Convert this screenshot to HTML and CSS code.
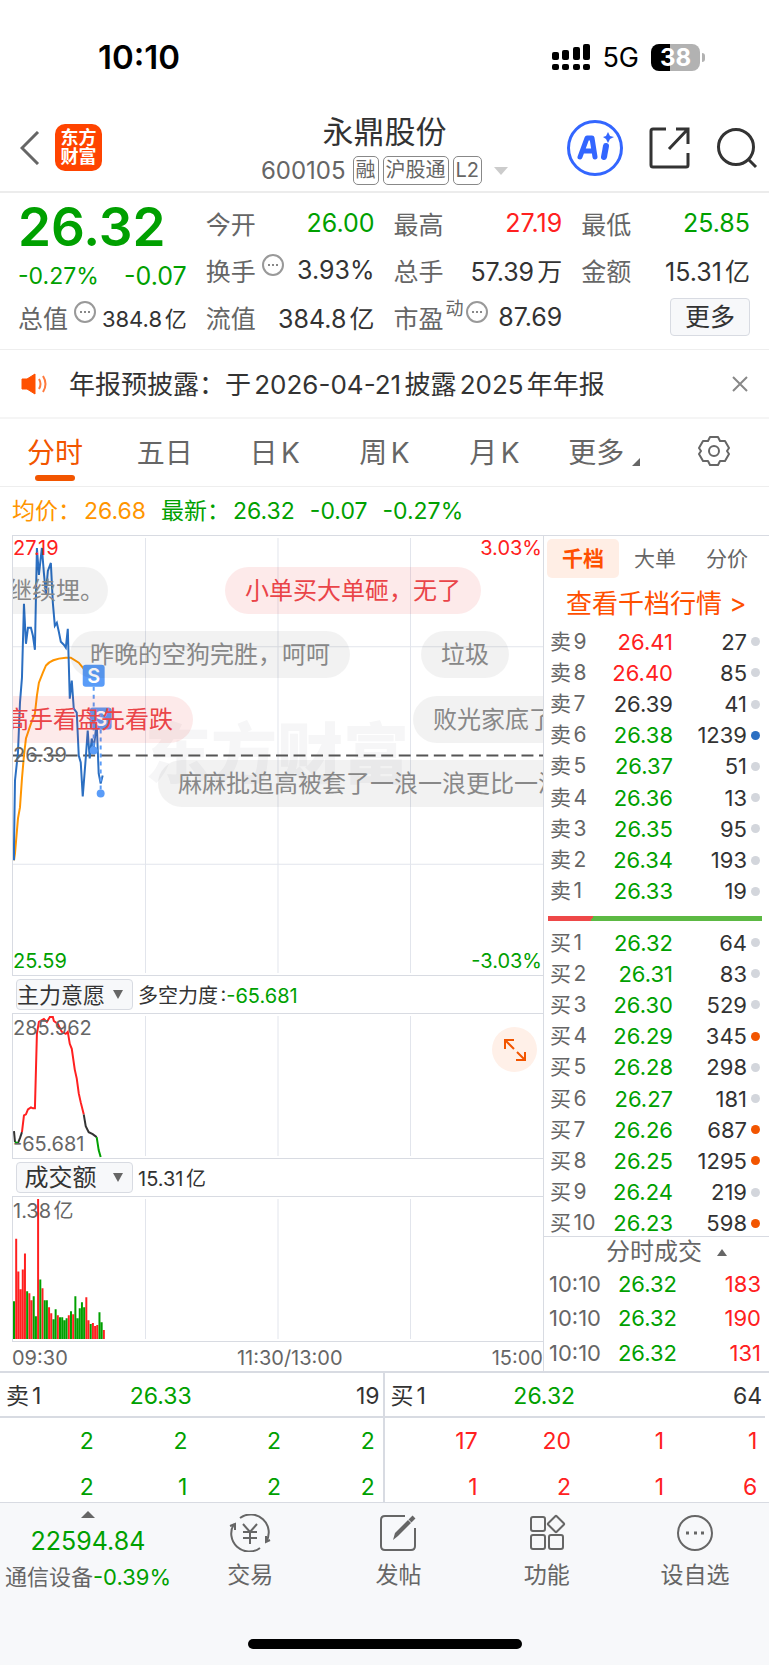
FILE: index.html
```html
<!DOCTYPE html>
<html lang="zh-CN">
<head>
<meta charset="UTF-8">
<meta name="viewport" content="width=device-width, initial-scale=1">
<title>永鼎股份 600105</title>
<link rel="stylesheet" href="styles.css">
</head>
<body>
  <div class="status">
    <span class="clock">10:10</span>
    <div class="status-right">
      <svg width="38" height="26" viewBox="0 0 38 26">
        <rect x="0" y="8" width="7" height="8" rx="2"/><rect x="10" y="6" width="7" height="10" rx="2"/>
        <rect x="21" y="3" width="7" height="13" rx="2"/><rect x="31" y="0" width="7" height="16" rx="2"/>
        <rect x="0" y="20" width="7" height="6" rx="2"/><rect x="10" y="20" width="7" height="6" rx="2"/>
        <rect x="21" y="20" width="7" height="6" rx="2"/><rect x="31" y="20" width="7" height="6" rx="2"/>
      </svg>
      <span class="net">5G</span>
      <span class="battery">38</span>
    </div>
  </div>

  <header class="header">
    <div class="header-left">
      <button class="icon-btn" aria-label="返回">
        <svg width="20" height="34" viewBox="0 0 20 34" fill="none" stroke="#666" stroke-width="3"><path d="M18 1L2 17L18 33"/></svg>
      </button>
      <a class="logo" href="#">东方<br>财富</a>
    </div>
    <div class="title">
      <h1>永鼎股份</h1>
      <div class="code">
        <span class="code-num">600105</span>
        <span class="tag">融</span><span class="tag">沪股通</span><span class="tag">L2</span>
        <svg class="code-arrow" width="14" height="8" viewBox="0 0 14 8"><path d="M0 0H14L7 8Z" fill="#ccc"/></svg>
      </div>
    </div>
    <div class="header-right">
      <button class="icon-btn" aria-label="AI">
        <svg width="58" height="58" viewBox="0 0 58 58">
          <circle cx="29" cy="29" r="26.5" fill="none" stroke="#3366ff" stroke-width="3"/>
          <path d="M14 38L21 19H26L29 38M17 32H28" fill="none" stroke="#3366ff" stroke-width="5" stroke-linejoin="round" stroke-linecap="round"/>
          <path d="M40 27L38 38" stroke="#3366ff" stroke-width="6" stroke-linecap="round"/>
          <path d="M42 13L44 17L48 18L44 20L42 24L40 20L37 18L40 17Z" fill="#3366ff"/>
        </svg>
      </button>
      <button class="icon-btn" aria-label="分享">
        <svg width="42" height="42" viewBox="0 0 42 42" fill="none" stroke="#333" stroke-width="3">
          <path d="M17 2H4Q2 2 2 4V38Q2 40 4 40H37Q39 40 39 38V26"/><path d="M20 22L38 3M27 2H39V17"/>
        </svg>
      </button>
      <button class="icon-btn" aria-label="搜索">
        <svg width="42" height="42" viewBox="0 0 42 42" fill="none" stroke="#333" stroke-width="3">
          <circle cx="20" cy="20" r="17.5"/><path d="M32 32L40 40"/>
        </svg>
      </button>
    </div>
  </header>

  <section class="quote">
    <div class="col">
      <div class="price">26.32</div>
      <div class="change"><span>-0.27%</span><span class="change-abs">-0.07</span></div>
      <div class="cell small"><span>总值</span><i class="more-dot"></i><b>384.8亿</b></div>
    </div>
    <div class="col">
      <div class="cell"><span>今开</span><b class="green">26.00</b></div>
      <div class="cell"><span>换手</span><i class="more-dot"></i><b>3.93%</b></div>
      <div class="cell"><span>流值</span><b>384.8亿</b></div>
    </div>
    <div class="col">
      <div class="cell"><span>最高</span><b class="red">27.19</b></div>
      <div class="cell"><span>总手</span><b>57.39万</b></div>
      <div class="cell"><span>市盈</span><sup>动</sup><i class="more-dot tight"></i><b>87.69</b></div>
    </div>
    <div class="col">
      <div class="cell"><span>最低</span><b class="green">25.85</b></div>
      <div class="cell"><span>金额</span><b>15.31亿</b></div>
      <div class="cell"><button class="btn-more">更多</button></div>
    </div>
  </section>

  <div class="notice">
    <svg width="28" height="22" viewBox="0 0 28 22">
      <path d="M1 6H6L14 1V21L6 16H1Z" fill="#ff5000" stroke="#ff5000" stroke-linejoin="round"/>
      <path d="M18 6Q21 11 18 16M22 3Q27 11 22 19" fill="none" stroke="#ff7a3d" stroke-width="2"/>
    </svg>
    <p>年报预披露：于2026-04-21披露2025年年报</p>
    <button class="icon-btn" aria-label="关闭">
      <svg width="16" height="16" viewBox="0 0 16 16" stroke="#888" stroke-width="2"><path d="M1 1L15 15M15 1L1 15"/></svg>
    </button>
  </div>

  <nav class="tabs">
    <button class="tab active">分时</button>
    <button class="tab">五日</button>
    <button class="tab">日K</button>
    <button class="tab">周K</button>
    <button class="tab">月K</button>
    <button class="tab">更多<svg class="corner" width="8" height="8" viewBox="0 0 8 8"><path d="M8 0V8H0Z" fill="#666"/></svg></button>
    <button class="tab" aria-label="设置">
      <svg width="32" height="32" viewBox="0 0 32 32" fill="none" stroke="#666" stroke-width="2" stroke-linejoin="round">
        <path d="M12 2H20L22 6L27 6L31 13L29 16L31 19L27 26L22 26L20 30H12L10 26L5 26L1 19L3 16L1 13L5 6L10 6Z"/><circle cx="16" cy="16" r="5"/>
      </svg>
    </button>
  </nav>

  <div class="legend">
    <span class="orange">均价：<b>26.68</b></span>
    <span class="green">最新：<b>26.32</b></span>
    <span class="green">-0.07</span>
    <span class="green">-0.27%</span>
  </div>

  <main class="main">
    <div class="charts">
      <div class="chart chart-price">
        <span class="watermark">东方财富</span>
        <svg class="plot" viewBox="0 0 532 440" preserveAspectRatio="none" fill="none">
          <path d="M133 2V438M266 2V438M399 2V438M0 111H532M0 329H532" stroke="#e2e5ec"/>
          <path d="M0 220H532" stroke="#555" stroke-width="2" stroke-dasharray="12 5.6"/>
          <path d="M1 325L2 318L5 283L7 272L9 243L11 220L13 203L18 188L22 178L24 160L26 147L30 137L33 130Q38 123 53 122H58L66 127L75 138L81 140L90 143" stroke="#ff9500" stroke-width="2"/>
          <path d="M1 325L1 310L2 245L5 217L7 167L9 142L11 68L13 108L15 92L18 92L20 100L22 114L24 12L26 39L29 12L31 37L33 58L35 35L38 27L40 67L42 90L44 87L46 96L48 106L51 109L53 112L55 93L57 163L59 145L61 173L64 177L66 220L68 227L70 261L73 223L75 195L77 223L79 203L81 213L84 187L86 238L88 248L90 240" stroke="#2b6fc2" stroke-width="2"/>
          <path d="M81 151V215M88 194V258" stroke="#5a9cf8" stroke-width="2" stroke-dasharray="4 4"/>
          <circle cx="81" cy="215" r="4" fill="#5a9cf8"/><circle cx="88" cy="258" r="4" fill="#5a9cf8"/>
          <rect x="70" y="129" width="22" height="22" rx="3" fill="#5a9cf8"/>
          <rect x="77" y="172" width="22" height="22" rx="3" fill="#5a9cf8"/>
          <text class="mark" x="81" y="147">S</text>
          <text class="mark" x="88" y="190">S</text>
        </svg>
        <span class="lab top-left red">27.19</span>
        <span class="lab top-right red">3.03%</span>
        <span class="lab mid-left">26.39</span>
        <span class="lab bottom-left green">25.59</span>
        <span class="lab bottom-right green">-3.03%</span>
        <span class="bubble cut b1">继续埋。</span>
        <span class="bubble hot b2">小单买大单砸，无了</span>
        <span class="bubble b3">昨晚的空狗完胜，呵呵</span>
        <span class="bubble b4">垃圾</span>
        <span class="bubble hot b5">高手看盘先看跌</span>
        <span class="bubble b6">败光家底了</span>
        <span class="bubble b7">麻麻批追高被套了一浪一浪更比一浪</span>
      </div>

      <div class="indicator">
        <div class="pick">
          <select aria-label="指标一"><option>主力意愿</option></select>
          <svg width="10" height="9" viewBox="0 0 10 9"><path d="M0 0H10L5 9Z" fill="#666"/></svg>
        </div>
        <span>多空力度:<em class="green">-65.681</em></span>
      </div>
      <div class="chart chart-sub">
        <svg class="plot" viewBox="0 0 532 145" preserveAspectRatio="none" fill="none">
          <path d="M133 2V143M266 2V143M399 2V143" stroke="#e2e5ec"/>
          <g stroke-width="2">
            <path d="M1 118L2 129M5 130L7 125L9 119M71 101L73 113L76 119L80 121L84 124" stroke="#333"/>
            <path d="M2 129L5 130M84 124L86 137L88 144" stroke="#00a000"/>
            <path d="M9 119L11 102L13 101L15 96L18 94L20 95L22 95L24 20L26 8L31 5L34 8L37 3L40 3L41 7L45 10L49 18L53 20L55 18L57 30L59 35L62 56L64 65L66 80L68 89L71 101" stroke="#ff2020"/>
          </g>
        </svg>
        <span class="lab sub-top">285.962</span>
        <span class="lab sub-bottom">-65.681</span>
        <button class="expand" aria-label="全屏">
          <svg width="24" height="24" viewBox="0 0 24 24" fill="none" stroke="#f25500" stroke-width="2">
            <path d="M2 11V2H11M2 2L11 11M22 14V22H13M22 22L14 14"/>
          </svg>
        </button>
      </div>

      <div class="indicator">
        <div class="pick wide">
          <select aria-label="指标二"><option>成交额</option></select>
          <svg width="10" height="9" viewBox="0 0 10 9"><path d="M0 0H10L5 9Z" fill="#666"/></svg>
        </div>
        <span>15.31亿</span>
      </div>
      <div class="chart chart-sub">
        <svg class="plot" viewBox="0 0 532 145" preserveAspectRatio="none" fill="none">
          <path d="M133 2V143M266 2V143M399 2V143" stroke="#e2e5ec"/>
          <g stroke-width="2">
            <path d="M3.2 143V42M5.4 143V75M7.6 143V93M9.8 143V73M12 143V57M16.4 143V97M18.6 143V104M25.2 143V2M29.6 143V92M36.2 143V111M38.4 143V117M45 143V119M56 143V119M60.4 143V118M73.6 143V101M75.8 143V124M80.2 143V127M82.4 143V130M84.6 143V129M91.2 143V134" stroke="#ff2020"/>
            <path d="M1 143V105M14.2 143V95M20.8 143V100M23 143V120M27.4 143V83M31.8 143V104M34 143V104M40.6 143V123M42.8 143V113M47.2 143V121M49.4 143V121M51.6 143V124M53.8 143V122M58.2 143V115M62.6 143V100M64.8 143V122M67 143V112M69.2 143V106M71.4 143V111M78 143V128M86.8 143V116M89 143V126" stroke="#00a000"/>
          </g>
        </svg>
        <span class="lab sub-top">1.38亿</span>
      </div>
      <div class="axis"><span>09:30</span><span class="noon">11:30/13:00</span><span>15:00</span></div>
    </div>

    <aside class="side">
      <div class="side-tabs">
        <button class="side-tab on">千档</button><button class="side-tab">大单</button><button class="side-tab">分价</button>
      </div>
      <a class="depth-link" href="#">查看千档行情 &gt;</a>
      <table class="book sell">
        <tr><th>卖9</th><td class="red">26.41</td><td>27</td><td><i></i></td></tr>
        <tr><th>卖8</th><td class="red">26.40</td><td>85</td><td><i></i></td></tr>
        <tr><th>卖7</th><td>26.39</td><td>41</td><td><i></i></td></tr>
        <tr><th>卖6</th><td class="green">26.38</td><td>1239</td><td><i class="dot-blue"></i></td></tr>
        <tr><th>卖5</th><td class="green">26.37</td><td>51</td><td><i></i></td></tr>
        <tr><th>卖4</th><td class="green">26.36</td><td>13</td><td><i></i></td></tr>
        <tr><th>卖3</th><td class="green">26.35</td><td>95</td><td><i></i></td></tr>
        <tr><th>卖2</th><td class="green">26.34</td><td>193</td><td><i></i></td></tr>
        <tr><th>卖1</th><td class="green">26.33</td><td>19</td><td><i></i></td></tr>
      </table>
      <div class="ratio"></div>
      <table class="book buy">
        <tr><th>买1</th><td class="green">26.32</td><td>64</td><td><i></i></td></tr>
        <tr><th>买2</th><td class="green">26.31</td><td>83</td><td><i></i></td></tr>
        <tr><th>买3</th><td class="green">26.30</td><td>529</td><td><i></i></td></tr>
        <tr><th>买4</th><td class="green">26.29</td><td>345</td><td><i class="dot-orange"></i></td></tr>
        <tr><th>买5</th><td class="green">26.28</td><td>298</td><td><i></i></td></tr>
        <tr><th>买6</th><td class="green">26.27</td><td>181</td><td><i></i></td></tr>
        <tr><th>买7</th><td class="green">26.26</td><td>687</td><td><i class="dot-orange"></i></td></tr>
        <tr><th>买8</th><td class="green">26.25</td><td>1295</td><td><i class="dot-orange"></i></td></tr>
        <tr><th>买9</th><td class="green">26.24</td><td>219</td><td><i></i></td></tr>
        <tr><th>买10</th><td class="green">26.23</td><td>598</td><td><i class="dot-orange"></i></td></tr>
      </table>
      <button class="ticks-title">分时成交<svg width="10" height="7" viewBox="0 0 10 7"><path d="M5 0L10 7H0Z" fill="#666"/></svg></button>
      <table class="ticks">
        <tr><th>10:10</th><td class="green">26.32</td><td class="red">183</td></tr>
        <tr><th>10:10</th><td class="green">26.32</td><td class="red">190</td></tr>
        <tr><th>10:10</th><td class="green">26.32</td><td class="red">131</td></tr>
      </table>
    </aside>
  </main>

  <section class="queue">
    <div class="queue-side">
      <div class="queue-head"><span>卖1</span><span class="green">26.33</span><span>19</span></div>
      <table class="green">
        <tr><td>2</td><td>2</td><td>2</td><td>2</td></tr>
        <tr><td>2</td><td>1</td><td>2</td><td>2</td></tr>
      </table>
    </div>
    <div class="queue-side">
      <div class="queue-head"><span>买1</span><span class="green">26.32</span><span>64</span></div>
      <table class="red">
        <tr><td>17</td><td>20</td><td>1</td><td>1</td></tr>
        <tr><td>1</td><td>2</td><td>1</td><td>6</td></tr>
      </table>
    </div>
  </section>

  <footer class="footer">
    <div class="toolbar">
      <button class="sector">
        <svg width="14" height="7" viewBox="0 0 14 7"><path d="M7 0L14 7H0Z" fill="#666"/></svg>
        <span class="index green">22594.84</span>
        <span class="sector-name">通信设备<em class="green">-0.39%</em></span>
      </button>
      <button class="tool">
        <svg width="42" height="38" viewBox="0 0 42 38" fill="none" stroke="#666" stroke-width="2">
          <path d="M11 4A18 18 0 0 1 37 28M31 34A18 18 0 0 1 5 10M1 12L6 10V16M41 26L37 28V22"/>
          <path d="M14 10L21 18L28 10M21 18V30M14 18H28M14 24H28"/>
        </svg>
        交易
      </button>
      <button class="tool">
        <svg width="42" height="38" viewBox="0 0 42 38" fill="none" stroke="#666" stroke-width="2">
          <path d="M28 2H8Q4 2 4 6V32Q4 36 8 36H34Q38 36 38 32V14"/>
          <path d="M16 26L18 19L31 6L34 9L21 22Z" fill="#666" stroke="none"/><path d="M33 7L37 3" stroke-width="4"/>
        </svg>
        发帖
      </button>
      <button class="tool">
        <svg width="42" height="38" viewBox="0 0 42 38" fill="none" stroke="#666" stroke-width="2">
          <rect x="5" y="3" width="14" height="14" rx="2"/><rect x="5" y="21" width="14" height="14" rx="2"/>
          <rect x="23" y="21" width="14" height="14" rx="2"/><rect x="24" y="4" width="12" height="12" rx="1" transform="rotate(45 30 10)"/>
        </svg>
        功能
      </button>
      <button class="tool">
        <svg width="42" height="38" viewBox="0 0 42 38" fill="none" stroke="#666" stroke-width="2">
          <circle cx="21" cy="19" r="17"/><path d="M12 19H15M20 19H23M27 19H30" stroke-width="3"/>
        </svg>
        设自选
      </button>
    </div>
    <div class="home-bar"></div>
  </footer>
</body>
</html>
```
FILE: styles.css
```css
* { box-sizing: border-box; }
body {
margin: 0;
background: #fff;
color: #333;
font-family: Inter, "Noto Sans CJK SC", sans-serif;
font-size: 24px;
text-autospace: normal;
white-space: nowrap;
}
h1, p { margin: 0; font-weight: normal; }
svg { display: block; flex: none; }
i, em { font-style: normal; }
a { text-decoration: none; }
button, select {
font-family: inherit;
color: inherit;
background: none;
border: 0;
padding: 0;
margin: 0;
}
table { border-collapse: collapse; }
th { font-weight: normal; }
td, th { padding: 0; }
.green { color: #00a000; }
.red { color: #ff2020; }
.orange { color: #ff9500; }

/* status bar */
.status {
display: flex;
justify-content: space-between;
align-items: center;
height: 100px;
padding: 14px 69px 0 98px;
color: #000;
}
.clock { font-size: 33px; font-weight: 600; }
.status-right { display: flex; align-items: center; }
.net { margin: 0 12px; font-size: 27px; }
.battery {
position: relative;
width: 49px;
height: 27px;
border-radius: 8px;
background: linear-gradient(90deg, #000 38%, #b2b2b2 38%);
color: #fff;
font-size: 24px;
font-weight: 700;
line-height: 27px;
text-align: center;
}
.battery::after {
content: "";
position: absolute;
right: -5px; top: 9px;
width: 3px; height: 9px;
border-radius: 0 3px 3px 0;
background: #b2b2b2;
}

/* header */
.header {
display: grid;
grid-template-columns: 1fr auto 1fr;
align-items: center;
height: 93px;
padding: 4px 11px 0;
border-bottom: 2px solid #ececec;
}
.icon-btn { display: flex; }
.header-left { display: flex; align-items: center; gap: 15px; padding-left: 9px; }
.logo {
width: 47px; height: 47px;
padding-top: 4px;
border-radius: 10px;
background: #ff4400;
color: #fff;
font-size: 18px;
font-weight: 700;
line-height: 19px;
text-align: center;
}
.title { text-align: center; }
.title h1 { font-size: 31px; line-height: 42px; margin-top: 4px; }
.code { display: flex; align-items: center; gap: 4px; height: 36px; color: #666; }
.code-num { margin-right: 3px; font-size: 24px; }
.tag {
border: 1px solid #888;
border-radius: 5px;
padding: 0 2px;
font-size: 20px;
line-height: 27px;
}
.code-arrow { margin-left: 8px; }
.header-right { display: flex; align-items: center; justify-content: flex-end; gap: 25px; }

/* quote */
.quote {
display: grid;
grid-template-columns: repeat(4, 1fr);
gap: 19px;
padding: 6px 19px 9px 18px;
border-bottom: 1px solid #eee;
}
.price { height: 59px; color: #00a000; font-size: 53px; font-weight: 600; line-height: 57px; }
.change { display: flex; justify-content: space-between; height: 35px; color: #00a000; font-size: 23px; line-height: 36px; }
.change-abs { font-size: 25px; }
.cell { display: flex; align-items: center; height: 47px; font-size: 25px; }
.cell span { color: #666; }
.cell b { margin-left: auto; font-weight: normal; }
.small b { font-size: 22px; }
.cell sup { margin-left: 2px; padding-bottom: 16px; color: #666; font-size: 18px; line-height: 18px; }
.more-dot {
display: flex;
align-items: center;
justify-content: center;
width: 22px; height: 22px;
margin: 0 0 10px 6px;
border: 2px solid #999;
border-radius: 50%;
}
.more-dot::before {
content: "";
width: 2px; height: 2px;
background: #888;
box-shadow: -4px 0 #888, 4px 0 #888;
}
.tight { margin-left: 2px; }
.btn-more {
width: 80px; height: 38px;
margin-left: auto;
border: 1px solid #d8dbe2;
border-radius: 4px;
background: #f7f8fa;
font-size: 25px;
line-height: 32px;
}

/* notice */
.notice {
display: flex;
align-items: center;
height: 69px;
padding: 0 21px;
border-bottom: 2px solid #f5f5f5;
}
.notice p { flex: 1; margin-left: 20px; padding-bottom: 2px; font-size: 26px; }

/* period tabs */
.tabs {
display: flex;
height: 68px;
border-bottom: 1px solid #eee;
}
.tab {
position: relative;
flex: 1;
display: flex;
align-items: center;
justify-content: center;
padding-bottom: 4px;
color: #666;
font-size: 28px;
}
.active { color: #f25500; }
.active::after {
content: "";
position: absolute;
left: 50%; bottom: 5px;
width: 40px; height: 6px;
margin-left: -20px;
border-radius: 3px;
background: #f25500;
}
.corner { margin: 22px 0 0 8px; }

.legend { display: flex; gap: 15px; height: 48px; padding-left: 12px; font-size: 23px; line-height: 48px; }
.legend b { margin-left: 3px; font-weight: normal; }

/* charts */
.main {
display: grid;
grid-template-columns: 1fr 226px;
padding-left: 12px;
border-bottom: 2px solid #d8dbe2;
}
.charts { min-width: 0; }
.chart {
position: relative;
overflow: hidden;
border: solid #d8dbe2;
border-width: 1px 0 1px 1px;
}
.chart-price { height: 441px; }
.chart-sub { height: 146px; }
.plot { position: relative; width: 100%; height: 100%; }
.mark { fill: #fff; font-size: 20px; font-weight: 600; text-anchor: middle; }
.lab { position: absolute; color: #666; font-size: 20px; line-height: 24px; }
.lab.red { color: #ff2020; }
.lab.green { color: #00a000; }
.top-left { left: 0; top: 0; }
.top-right { right: 1px; top: 0; }
.mid-left { left: 0; top: 207px; }
.bottom-left { left: 0; bottom: 2px; }
.bottom-right { right: 1px; bottom: 2px; }
.sub-top { left: 0; top: 2px; }
.sub-bottom { left: 0; bottom: 2px; }
.watermark {
position: absolute;
left: 132px; top: 180px;
color: #f6f6f7;
font-size: 66px;
font-weight: 900;
line-height: 76px;
}
.bubble {
position: absolute;
height: 47px;
padding: 0 20px;
border-radius: 24px;
background: rgba(0, 0, 0, 0.05);
color: #888;
font-size: 24px;
line-height: 48px;
}
.hot { background: rgba(240, 50, 50, 0.1); color: #ea4448; }
.cut { padding-right: 4px; }
.b1 { left: -25px; top: 31px; }
.b2 { left: 212px; top: 31px; }
.b3 { left: 57px; top: 95px; }
.b4 { left: 408px; top: 95px; }
.b5 { left: -28px; top: 160px; }
.b6 { left: 400px; top: 160px; }
.b7 { left: 145px; top: 224px; }

.indicator { display: flex; align-items: center; gap: 5px; height: 37px; padding-left: 4px; font-size: 20px; }
.pick { position: relative; }
.pick select {
display: block;
appearance: none;
width: 117px; height: 31px;
padding-right: 28px;
border: 1px solid #d8dbe2;
border-radius: 4px;
background: #f7f8fa;
font-size: 22px;
line-height: 28px;
text-align-last: center;
}
.wide select { font-size: 24px; }
.pick svg { position: absolute; right: 10px; top: 11px; pointer-events: none; }
.expand {
position: absolute;
right: 6px; top: 13px;
display: flex;
align-items: center;
justify-content: center;
width: 45px; height: 45px;
border-radius: 50%;
background: #fff0e8;
}
.axis { display: flex; justify-content: space-between; height: 29px; color: #666; font-size: 20px; line-height: 32px; }
.noon { padding-left: 20px; }

/* order book */
.side { display: flex; flex-direction: column; border: solid #d8dbe2; border-width: 1px 0 0 1px; }
.side-tabs { display: flex; padding: 3px 6px 0 3px; }
.side-tab { flex: 1; height: 39px; border-radius: 5px; color: #666; font-size: 21px; line-height: 36px; }
.on { background: #ffeee5; color: #ff5000; font-weight: 700; }
.depth-link { height: 48px; padding-left: 22px; color: #ff5000; font-size: 26px; line-height: 52px; }
.book { width: 210px; margin-left: 6px; table-layout: fixed; font-size: 22px; line-height: 30px; }
.book th { width: 52px; color: #666; font-size: 21px; text-align: left; }
.book td { text-align: right; }
.book td:nth-child(2) { width: 71px; }
.book td:nth-child(4) { width: 13px; }
.book i { display: block; width: 9px; height: 9px; margin-left: auto; border-radius: 50%; background: #d3d6dc; }
.book .dot-blue { background: #2b6fc2; }
.book .dot-orange { background: #f25500; }
.sell { height: 281px; }
.buy { height: 312px; margin-bottom: -3px; }
.ratio {
height: 5px;
margin: 9px 7px 6px 4px;
background: linear-gradient(125deg, #ee4848 21%, #5cb943 21%);
}
.ticks-title {
display: flex;
align-items: center;
justify-content: center;
gap: 15px;
height: 31px;
padding-left: 20px;
border-top: 1px solid #d8dbe2;
color: #666;
font-size: 24px;
line-height: 30px;
}
.ticks { width: 212px; height: 103px; margin-left: 5px; font-size: 22px; line-height: 30px; }
.ticks th { width: 58px; color: #666; text-align: left; }
.ticks td { text-align: right; }
.ticks td:nth-child(2) { width: 70px; }

/* order queue */
.queue {
display: grid;
grid-template-columns: 1fr 1fr;
padding-right: 4px;
border-bottom: 1px solid #d8dbe2;
font-size: 23px;
}
.queue-side + .queue-side { border-left: 2px solid #d8dbe2; }
.queue-head {
display: grid;
grid-template-columns: 1fr 2fr 1fr;
height: 45px;
padding: 0 3px 0 6px;
border-bottom: 2px solid #d8dbe2;
line-height: 46px;
}
.queue-head span:nth-child(2) { padding-right: 64px; text-align: center; }
.queue-head span:last-child { text-align: right; }
/* second row runs slightly under the toolbar */
.queue table { width: 98%; margin-bottom: -8px; table-layout: fixed; line-height: 46px; }
.queue td { text-align: right; }

/* bottom toolbar */
.footer { background: #f7f8fa; padding-bottom: 16px; color: #666; }
.toolbar { display: grid; grid-template-columns: 176px repeat(4, 1fr); height: 136px; }
.sector { display: flex; flex-direction: column; align-items: center; justify-content: flex-start; padding-top: 8px; }
.index { font-size: 25px; line-height: 36px; margin-top: 5px; }
.sector-name { font-size: 22px; line-height: 36px; }
.tool { display: flex; flex-direction: column; align-items: center; padding-top: 11px; font-size: 23px; line-height: 30px; gap: 8px; }
.home-bar { width: 274px; height: 10px; margin: 0 auto; border-radius: 5px; background: #000; }
```
